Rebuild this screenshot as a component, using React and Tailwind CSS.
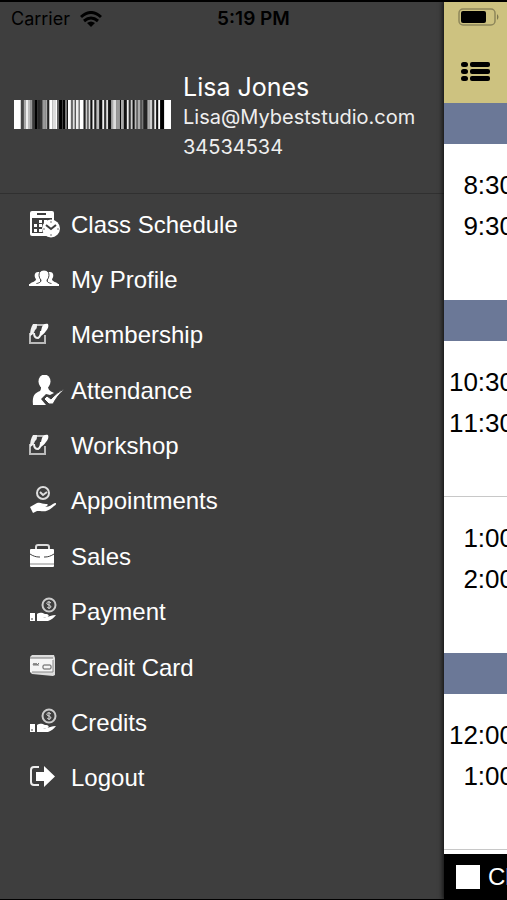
const bars = [
  ["#fff", 7], ["#444", 3], ["#aaa", 2], ["#eee", 3], ["#bbb", 2], ["#999", 2],
  ["#000", 1], ["#777", 1], ["#000", 3], ["#555", 1], ["#000", 1], ["#333", 3],
  ["#999", 3], ["#aaa", 2], ["#222", 2], ["#fff", 3], ["#ddd", 3], ["#fff", 2],
  ["#666", 2], ["#000", 3], ["#444", 1], ["#000", 2], ["#777", 2], ["#111", 1],
  ["#fff", 3], ["#666", 2], ["#ddd", 2], ["#333", 1], ["#eee", 3], ["#555", 1],
  ["#fff", 4], ["#222", 2], ["#ccc", 2], ["#333", 1], ["#ddd", 2], ["#111", 2],
  ["#eee", 2], ["#222", 2], ["#bbb", 3], ["#111", 3], ["#eee", 2], ["#333", 2],
  ["#ddd", 2], ["#111", 3], ["#aaa", 2], ["#ddd", 3], ["#999", 4], ["#000", 1],
  ["#aaa", 3], ["#111", 3], ["#eee", 2], ["#333", 2], ["#ccc", 2], ["#111", 2],
  ["#bbb", 2], ["#444", 1], ["#aaa", 3], ["#333", 1], ["#777", 2], ["#222", 4],
  ["#aaa", 2], ["#ccc", 3], ["#333", 2], ["#eee", 2], ["#111", 2], ["#fff", 2],
  ["#000", 4], ["#fff", 7],
];

function Barcode() {
  let x = 0;
  const rects = bars.map(([fill, width]) => {
    const rect = { fill, width, x };
    x += width;
    return rect;
  });
  return (
    <svg
      viewBox={`0 0 ${x} 29`}
      preserveAspectRatio="none"
      className="h-[29px] w-[157px] shrink-0"
      aria-label="Member barcode"
    >
      {rects.map((r) => (
        <rect key={r.x} x={r.x} y="0" width={r.width} height="29" fill={r.fill} />
      ))}
    </svg>
  );
}

function Icon({ children }) {
  return (
    <svg
      viewBox="0 0 36 32"
      className="h-8 w-9 shrink-0"
      fill="none"
      stroke="none"
      aria-hidden="true"
    >
      {children}
    </svg>
  );
}

function ScheduleIcon() {
  return (
    <Icon>
      <rect x="2" y="2" width="24" height="25" rx="2" fill="#fff" />
      <path d="M9 5h9" stroke="#3e3e3e" strokeWidth="2" />
      <path d="M4 9h20v15H4z" fill="#3e3e3e" />
      <path
        d="M11 11h3v3h-3zM16 11h3v3h-3zM6 15h3v3H6zM11 15h3v3h-3zM16 15h3v3h-3zM6 20h3v3H6zM11 20h3v3h-3zM21 11h2v3h-2z"
        fill="#fff"
      />
      <circle cx="23" cy="19.5" r="9" fill="#fff" />
      <path d="m18 16 5 4 5-4" stroke="#3e3e3e" strokeWidth="2" />
      <path d="M23 12v2M23 25v2M15 20h2M29 20h2" stroke="#777" />
    </Icon>
  );
}

function ProfileIcon() {
  return (
    <Icon>
      <g fill="#fff">
        <path d="M2 20c1-2 6-2 6-5-2-2-2-7 2-7 3 0 4 2 3 4-2 3 0 5-1 6l-4 3z" />
        <path d="M30 20c-1-2-6-2-6-5 2-2 2-7-2-7-3 0-4 2-3 4 2 3 0 5 1 6l4 3z" />
        <path
          d="M7 22c1-4 6-2 6-6-3-3-3-10 3-10s6 7 3 10c0 4 5 2 6 6z"
          stroke="#3e3e3e"
          strokeWidth="1"
        />
        <path d="M1 20h30v2H1z" />
      </g>
    </Icon>
  );
}

function FormIcon() {
  return (
    <Icon>
      <path d="M5 6h12M2 14v10h15v-8" stroke="#bbb" strokeWidth="2" />
      <path
        d="M2 17C2 12 3 8 5 5h4c0 3 0 5-2 6-1 3-2 5-5 6z"
        fill="#f0f0f0"
      />
      <path d="M6 14c0 4 2 5 4 5 2-1 3-3 3-7" stroke="#f0f0f0" strokeWidth="2" />
      <path d="M14 8c1-3 4-4 6-3 1 2 0 5-2 7-2 3-4 4-7 6 2-4 2-7 3-10z" fill="#fff" />
    </Icon>
  );
}

function AttendanceIcon() {
  return (
    <Icon>
      <ellipse cx="16.500" cy="6.500" rx="6" ry="7" fill="#fff" />
      <path
        d="M13 11h7c0 4 2 5 6 7l-4 2-4-1-5 5 5 6H5c-1-10 2-12 7-14 1-1 1-3 1-5z"
        fill="#fff"
      />
      <path
        d="m16 24 3-3 4 3c4-4 8-8 14-10-5 4-9 9-12 15h-4z"
        fill="#fff"
        stroke="#3e3e3e"
        strokeWidth="1"
      />
    </Icon>
  );
}

function AppointmentIcon() {
  return (
    <Icon>
      <circle cx="15" cy="8" r="6" stroke="#ddd" strokeWidth="2" />
      <path d="m12 7 3 3 4-3" stroke="#ddd" strokeWidth="2" />
      <path
        d="m2 22 7-4c4-1 5 1 9 1 3 0 2 2-1 3 5 0 7-3 10-4 2 0 1 2-1 3-5 5-9 6-14 5H9l-4 2z"
        fill="#fff"
      />
    </Icon>
  );
}

function SalesIcon() {
  return (
    <Icon>
      <path d="M8 8V6q0-2 2-2h9q2 0 2 2v2" stroke="#ddd" strokeWidth="2" />
      <rect x="2" y="8" width="24" height="18" rx="1" fill="#fff" />
      <path d="M2 13c3 2 6 3 9 3h6c3 0 6-1 9-3" stroke="#3e3e3e" />
      <path d="M2 23h24" stroke="#888" />
      <path d="M12 14h4v3h-4z" fill="#fff" />
    </Icon>
  );
}

function PaymentIcon() {
  return (
    <Icon>
      <circle cx="21" cy="9" r="6.500" stroke="#ccc" strokeWidth="2" />
      <path
        d="M23 7c-2-2-5-1-4 1 1 1 4 1 4 3-1 2-3 1-4 0M21 5v8"
        stroke="#ddd"
      />
      <path d="M2 17h5v8H2z" fill="#fff" />
      <path d="M4 22v2" stroke="#3e3e3e" />
      <path
        d="M9 18c4-2 5-1 8 0 4 0 5 2 2 3h-4c5 1 8-2 13-2-2 3-5 5-8 6H9z"
        fill="#fff"
      />
    </Icon>
  );
}

function CardIcon() {
  return (
    <Icon>
      <path d="M4 3h22l1 3v17l-2 1L4 22l-2-2V5z" fill="#ddd" />
      <path d="M2 6h23v14H2z" fill="#f4f4f4" />
      <path d="M2 6h23" stroke="#777" />
      <path d="m5 13 1-2 1 2 1-2 1 2 2-2M5 13h6" stroke="#777" />
      <rect x="15" y="13" width="8" height="4" rx="1" stroke="#555" />
      <path d="M4 20h21V8" stroke="#888" />
    </Icon>
  );
}

function LogoutIcon() {
  return (
    <Icon>
      <path d="M11 5H6Q3 5 3 8v12q0 3 3 3h5" stroke="#eee" strokeWidth="2" />
      <path d="M8 10h8V4l11 10.500L16 25v-6H8z" fill="#fff" />
    </Icon>
  );
}

const menu = [
  { label: "Class Schedule", icon: ScheduleIcon },
  { label: "My Profile", icon: ProfileIcon },
  { label: "Membership", icon: FormIcon },
  { label: "Attendance", icon: AttendanceIcon },
  { label: "Workshop", icon: FormIcon },
  { label: "Appointments", icon: AppointmentIcon },
  { label: "Sales", icon: SalesIcon },
  { label: "Payment", icon: PaymentIcon },
  { label: "Credit Card", icon: CardIcon },
  { label: "Credits", icon: PaymentIcon },
  { label: "Logout", icon: LogoutIcon },
];

function Slot({ start, end, divider }) {
  return (
    <div
      className={`h-[156px] pt-[21px] ${divider ? "border-b border-[#c8c8c8]" : ""}`}
    >
      <div className="w-[70px] text-right text-[26px] leading-[41px] text-black [font-kerning:none]">
        <p>{start}</p>
        <p>{end}</p>
      </div>
    </div>
  );
}

function DayBar() {
  return <div className="h-[41px] bg-[#6b7897]" />;
}

// The clock is centred on the whole screen, so the bar runs on under the page
function StatusBar() {
  return (
    <div className="-mr-[63px] grid grid-cols-[1fr_auto_1fr] items-center px-[11px] pt-[5px] font-[Inter,sans-serif] text-[18px] leading-6 text-black">
      <div className="flex items-center gap-[10px]">
        <span>Carrier</span>
        <svg viewBox="0 0 22 16" className="h-4 w-[22px]" aria-hidden="true">
          <path
            d="M1 6Q11-3 21 6M4 10q7-6 14 0"
            fill="none"
            stroke="#000"
            strokeWidth="3"
          />
          <path d="M7 12q4-3 8 0l-4 4z" fill="#000" />
        </svg>
      </div>
      <span className="text-[19px] font-semibold">5:19 PM</span>
    </div>
  );
}

function Drawer() {
  return (
    <aside className="flex min-w-0 flex-1 flex-col bg-[#3e3e3e]">
      <StatusBar />
      <header className="flex h-[163px] items-center gap-3 border-b border-[#303030] pl-[14px] pt-[5px] font-[Inter,sans-serif] text-white">
        <Barcode />
        <div className="pt-1">
          <h1 className="text-[25px] leading-[30px]">Lisa Jones</h1>
          <p className="text-[20px] leading-[30px] text-[#eee]">
            Lisa@Mybeststudio.com
          </p>
          <p className="text-[20px] leading-[30px] text-[#eee]">34534534</p>
        </div>
      </header>
      <nav className="pt-[3px]">
        <ul className="grid h-[609px] auto-rows-fr">
          {menu.map(({ label, icon: MenuIcon }) => (
            <li key={label} className="flex">
              <button
                type="button"
                className="flex w-full items-center gap-[7px] pl-7 text-left text-[24px] leading-7 text-white"
              >
                <MenuIcon />
                <span>{label}</span>
              </button>
            </li>
          ))}
        </ul>
      </nav>
    </aside>
  );
}

function SchedulePage() {
  return (
    <main className="z-10 flex w-[63px] shrink-0 flex-col overflow-hidden bg-white shadow-[0_0_5px_1px_rgba(0,0,0,0.8)]">
      <header className="h-[101px] bg-[#cdc280] pl-[14px] pt-[6px]">
        <svg viewBox="0 0 42 18" className="h-[18px] w-[42px]" aria-hidden="true">
          <rect x="1" y="1" width="36" height="16" rx="4" fill="none" stroke="#8d865a" strokeWidth="1.500" />
          <rect x="3" y="3" width="25" height="12" rx="2" fill="#000" />
          <path d="M39 6q3 3 0 6z" fill="#7d774f" />
        </svg>
        <button type="button" aria-label="Menu" className="mt-[35px] block pl-[3px]">
          <svg viewBox="0 0 29 22" className="h-[22px] w-[29px]" aria-hidden="true">
            {[1, 8, 15].map((y) => (
              <g key={y} fill="#000">
                <rect x="0" y={y} width="7" height="5" rx="2.500" />
                <rect x="9" y={y} width="20" height="5" rx="2" />
              </g>
            ))}
          </svg>
        </button>
      </header>
      <DayBar />
      <Slot start="8:30" end="9:30" />
      <DayBar />
      <Slot start="10:30" end="11:30" divider />
      <Slot start="1:00" end="2:00" />
      <DayBar />
      <Slot start="12:00" end="1:00" divider />
      <footer className="mt-auto flex h-[45px] items-center bg-black pl-3">
        <label className="flex items-center gap-2 whitespace-nowrap text-[24px] text-white">
          <input
            type="checkbox"
            className="size-6 shrink-0 appearance-none bg-white"
          />
          Class
        </label>
      </footer>
    </main>
  );
}

export default function App() {
  return (
    <div className="flex min-h-screen overflow-hidden border-b border-t-2 border-black bg-[#3e3e3e] font-['Liberation_Sans',Arial,sans-serif]">
      <Drawer />
      <SchedulePage />
    </div>
  );
}
